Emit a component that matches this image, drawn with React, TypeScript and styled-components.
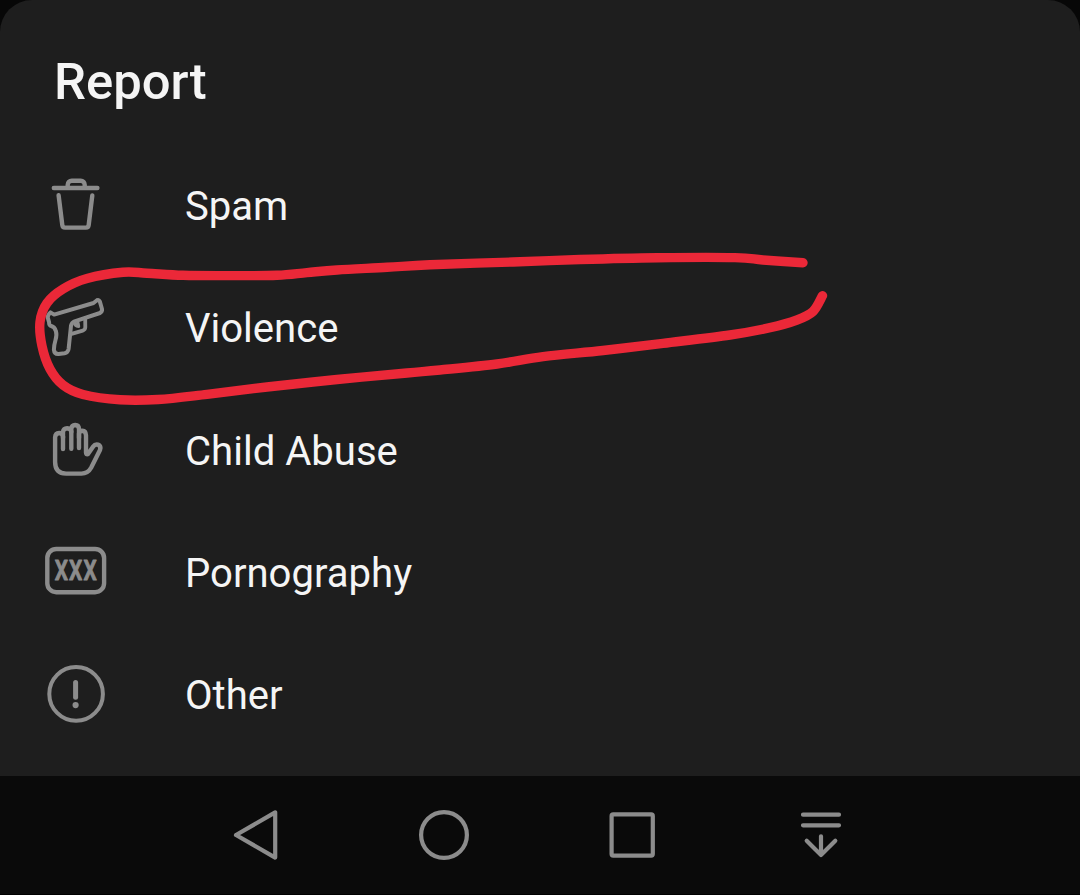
import React from 'react';
import styled, { createGlobalStyle } from 'styled-components';

const GlobalStyle = createGlobalStyle`
  body {
    margin: 0;
    background: #070707;
    font-family: Roboto, 'Liberation Sans', sans-serif;
  }
`;

const Screen = styled.div`
  position: relative;
  display: flex;
  flex-direction: column;
  width: 1080px;
  height: 895px;
  overflow: hidden;
`;

const Sheet = styled.main`
  box-sizing: border-box;
  flex: 1;
  padding: 52px 43px 0;
  background: #1e1e1e;
  border-radius: 32px 32px 0 0;
`;

const Title = styled.h1`
  margin: 0 0 32px;
  padding-left: 11px;
  font-size: 50.8px;
  font-weight: 500;
  line-height: 60px;
  color: #f5f5f5;
`;

const ReasonList = styled.ul`
  margin: 0;
  padding: 0;
  list-style: none;
`;

const Reason = styled.li`
  display: flex;
  align-items: center;
  gap: 78px;
  height: 122.25px;
`;

const ReasonIcon = styled.svg`
  flex: none;
  width: 64px;
  height: 64px;
  overflow: visible;
  fill: none;
  stroke: #8c8c8c;
  stroke-width: 4.4px;
  stroke-linecap: round;
  stroke-linejoin: round;
`;

const ReasonLabel = styled.span`
  padding-top: 4px;
  font-size: 40.1px;
  line-height: 48px;
  color: #f5f5f5;
`;

const IconText = styled.text`
  font-size: 27.5px;
  font-weight: 600;
  letter-spacing: 1.4px;
  fill: #8c8c8c;
  stroke-width: 1px;
`;

const NavBar = styled.nav`
  box-sizing: border-box;
  display: flex;
  align-items: center;
  gap: 132.3px;
  height: 119px;
  padding-left: 228px;
  background: #0a0a0a;
  border-bottom: 1px solid #000;
`;

const NavButton = styled.button`
  display: flex;
  padding: 0;
  background: none;
  border: 0;
`;

const NavIcon = styled.svg`
  width: 56px;
  height: 56px;
  fill: none;
  stroke: #8c8c8c;
  stroke-width: 4.2px;
  stroke-linecap: round;
  stroke-linejoin: round;
`;

const Marker = styled.svg`
  position: absolute;
  inset: 0;
  pointer-events: none;
  fill: none;
  stroke: #eb2838;
  stroke-width: 9.4px;
  stroke-linecap: round;
  stroke-linejoin: round;
`;

const reasons = [
  {
    label: 'Spam',
    icon: (
      <>
        <path d="M10.8 15H54.4" />
        <path d="M24.7 14v-2.3a4 4 0 0 1 4-4h9a4 4 0 0 1 4 4V14" />
        <path d="M15.6 22.2 19.3 52q.3 2.6 2.8 2.6h20.8q2.5 0 2.8-2.6l3.6-29.6" />
      </>
    ),
  },
  {
    label: 'Violence',
    icon: (
      <>
        <path
          strokeWidth="4"
          d="M50.5 8 54 5.2q1.8-.8 2.8 1.2l2.2 7.6q.4 2.6-2 4L31.6 26.3q-3 1.2-3.6 4.4L25.6 54q-.6 3.6-4 4.2l-6 .7q-4.3.3-4.7-4.2.2-5 1.6-9.7 1.6-5 .4-8.8-1.2-4.4-5.2-5.4-1.8-.8-1.6-3.4L4.7 22.4q0-2.6 2.8-5l3.6 2.2Z"
        />
        <path strokeWidth="3.8" d="m42.2 24.5.1 7.8q-.1 2.6-2.6 3.3L28.6 38.8" />
        <path strokeWidth="3.4" d="M31.5 27.8q.5 3.2 4 3.6l-.6-3.4" />
      </>
    ),
  },
  {
    label: 'Child Abuse',
    icon: (
      <>
        <path d="M20 31V18.6q-.4-3.6-3.8-3.6-3.9.2-4.1 4.4V44q0 11.6 11 11.6h15.4q6.4 0 9.6-5.8L57 32q1.4-4-2-5.4-3-.8-4.8 1.8l-5.4 7.8q-1.8.4-1.8-1.6V17.4q-.2-4.4-3.6-4.6-3 0-3.4 3V30" />
        <path d="M20 20v-6.2q.4-3.4 4.2-3.6 3.8.2 4.1 3.6v17" />
        <path d="M28.3 14v-3.2Q28.7 7.2 32.2 7q3.6.2 3.8 3.8V20" />
      </>
    ),
  },
  {
    label: 'Pornography',
    icon: (
      <>
        <rect x="4.3" y="9" width="56.8" height="43.2" rx="9" />
        <IconText transform="translate(11.8 40.4) scale(.76 1)">XXX</IconText>
      </>
    ),
  },
  {
    label: 'Other',
    icon: (
      <>
        <circle cx="33.1" cy="31.9" r="26.8" strokeWidth="4" />
        <path d="M32.6 20.4V35.2" strokeWidth="5" />
        <circle cx="32.6" cy="43.1" r="3.1" fill="#8c8c8c" stroke="none" />
      </>
    ),
  },
];

const navItems = [
  { name: 'Back', icon: <path d="M47.2 5.4v45.2L8 28Z" /> },
  { name: 'Home', icon: <circle cx="28" cy="28" r="22.9" /> },
  {
    name: 'Recents',
    icon: <rect x="6.6" y="7.4" width="41.2" height="41.2" rx="1.6" />,
  },
  {
    name: 'Hide navigation',
    icon: <path d="M10 7.7h36M10 18.3h36M28 29.3V48M13.7 33.8 28 48l14.3-14.2" />,
  },
];

const strokePoints = [
  [803, 262.8], [763, 260], [735, 257.6], [657, 257.7], [580, 259.5],
  [513, 262], [430, 264.7], [387, 267.3], [337, 270], [307, 272.6],
  [277, 275.3], [230, 275.6], [183, 275.3], [147, 273.2], [123, 272.3],
  [87, 278.5], [63, 289], [47, 303], [40, 322], [42, 346],
  [50, 369], [63, 385], [83, 394.5], [120, 399.8], [158, 399.5],
  [207, 394.3], [267, 387], [337, 379.5], [407, 373], [440, 370],
  [497, 364], [543, 356.7], [603, 350.5], [663, 343.3], [730, 335],
  [770, 327.7], [797, 320], [813, 311.5], [822.5, 295.7],
];

// Catmull-Rom spline through the points, as cubic segments
const toSmoothPath = (points: number[][]) =>
  points.slice(1).reduce((path, end, i) => {
    const start = points[i];
    const before = points[i - 1] ?? start;
    const after = points[i + 2] ?? end;
    const c1 = start.map((v, k) => v + (end[k] - before[k]) / 6);
    const c2 = end.map((v, k) => v - (after[k] - start[k]) / 6);

    return `${path}C${c1} ${c2} ${end}`;
  }, `M${points[0]}`);

const App = () => {
  return (
    <Screen>
      <GlobalStyle />
      <Sheet>
        <Title>Report</Title>
        <ReasonList>
          {reasons.map(({ label, icon }) => (
            <Reason key={label}>
              <ReasonIcon viewBox="0 0 64 64">{icon}</ReasonIcon>
              <ReasonLabel>{label}</ReasonLabel>
            </Reason>
          ))}
        </ReasonList>
      </Sheet>
      <NavBar>
        {navItems.map(({ name, icon }) => (
          <NavButton key={name} aria-label={name}>
            <NavIcon viewBox="0 0 56 56">{icon}</NavIcon>
          </NavButton>
        ))}
      </NavBar>
      <Marker width="1080" height="895" viewBox="0 0 1080 895">
        <path d={toSmoothPath(strokePoints)} />
      </Marker>
    </Screen>
  );
};

export default App;
